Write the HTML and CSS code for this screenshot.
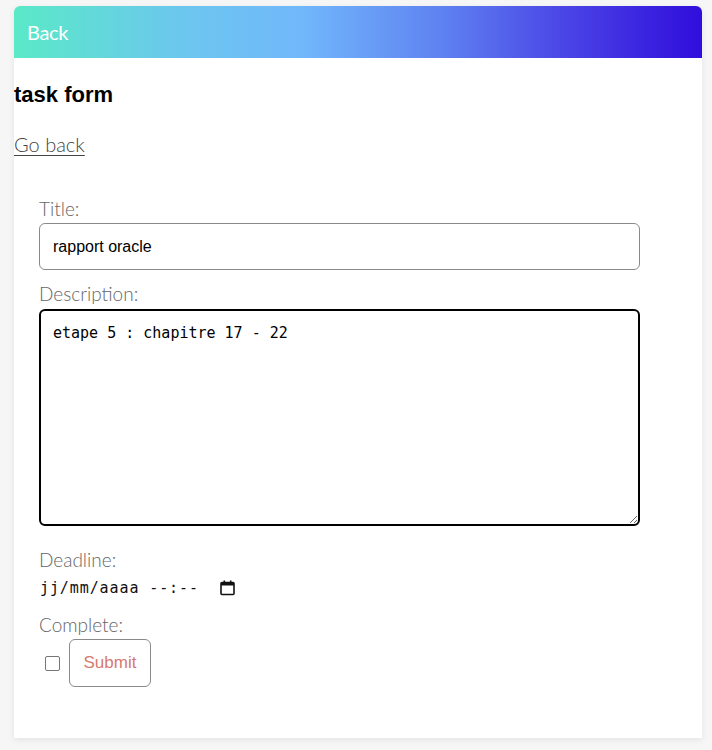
FILE: index.html
```html
<!DOCTYPE html>
<html lang="fr">
<head>
<meta charset="utf-8">
<title>task form</title>
<link rel="stylesheet" href="styles.css">
</head>
<body>
<div class="card">
  <header class="topbar"><a class="back" href="#">Back</a></header>
  <h3 class="heading">task form</h3>
  <a class="goback" href="#">Go back</a>
  <form class="form">
    <label class="lbl" for="title">Title:</label>
    <input class="field" id="title" type="text" value="rapport oracle">
    <label class="lbl" for="desc">Description:</label>
    <textarea class="area" id="desc">etape 5 : chapitre 17 - 22</textarea>
    <label class="lbl">Deadline:</label>
    <div class="date">
      <span class="date-text">jj/mm/aaaa --:--</span>
      <svg class="cal" width="15" height="16" viewBox="0 0 15 16"><rect x="1" y="2.5" width="13" height="12" rx="1" fill="none" stroke="#111" stroke-width="1.6"/><rect x="1" y="2.5" width="13" height="3" fill="#111"/><rect x="3.5" y="0.5" width="1.6" height="3" fill="#111"/><rect x="9.9" y="0.5" width="1.6" height="3" fill="#111"/></svg>
    </div>
    <label class="lbl">Complete:</label>
    <div class="row">
      <span class="check"></span>
      <button class="submit" type="button">Submit</button>
    </div>
  </form>
</div>
</body>
</html>
```
FILE: styles.css
```css
html, body { margin: 0; padding: 0; }
body {
  background: #f6f6f6;
  padding: 6px 10px 12px 14px;
  font-family: Lato, "Open Sans", sans-serif;
}
.card {
  background: #fff;
  border-radius: 6px 6px 0 0;
  box-shadow: 0 2px 6px rgba(0,0,0,0.08);
  height: 732px;
  box-sizing: border-box;
}
.topbar {
  height: 52px;
  border-radius: 6px 6px 0 0;
  background: linear-gradient(to right, #5ae9c7 0%, #6cc6ef 25%, #71b7fb 42%, #5f82f1 62%, #4a45e6 80%, #300ddc 100%);
  display: flex;
  align-items: center;
  padding-left: 13px;
}
.back {
  color: #fff;
  text-decoration: none;
  font-size: 20px;
  font-weight: 400;
  letter-spacing: -0.3px;
}
.heading {
  margin: 24px 0 0 0;
  font-family: "Liberation Sans", Arial, sans-serif;
  font-weight: 700;
  font-size: 22px;
  line-height: 26px;
  color: #000;
}
.goback {
  display: inline-block;
  margin-top: 24px;
  font-size: 20px;
  font-weight: 300;
  line-height: 24px;
  color: #444;
  text-decoration: underline;
  text-decoration-thickness: 1px;
  text-underline-offset: 3px;
}
.form {
  display: flex;
  flex-direction: column;
  align-items: flex-start;
  padding: 42px 0 0 25px;
}
.lbl {
  font-size: 19px;
  font-weight: 300;
  color: #666;
  line-height: 22px;
}
.field {
  margin-top: 3px;
  width: 601px;
  height: 47px;
  box-sizing: border-box;
  border: 1px solid #8a8a8a;
  border-radius: 6px;
  padding: 0 13px;
  font-family: "Liberation Sans", Arial, sans-serif;
  font-size: 16px;
  color: #000;
  outline: none;
  margin-bottom: 13px;
}
.area {
  margin-top: 4px;
  width: 601px;
  height: 217px;
  box-sizing: border-box;
  border: 2px solid #000;
  border-radius: 6px;
  padding: 12px 12px;
  font-family: "DejaVu Sans Mono", monospace;
  font-size: 15px;
  line-height: 20px;
  color: #000;
  outline: none;
  margin-bottom: 23px;
}
.date {
  display: flex;
  align-items: center;
  height: 22px;
  margin: 6px 0 15px 1px;
}
.date-text {
  font-family: "DejaVu Sans Mono", monospace;
  font-size: 15px;
  letter-spacing: 0.9px;
  color: #111;
  white-space: pre;
}
.cal { margin-left: 21px; }
.row {
  display: flex;
  align-items: center;
  margin-top: 3px;
}
.check {
  width: 13px;
  height: 13px;
  border: 1px solid #767676;
  border-radius: 2px;
  margin: 0 9px 0 6px;
  background: #fff;
}
.submit {
  width: 82px;
  height: 48px;
  border: 1px solid #8a8a8a;
  border-radius: 6px;
  background: #fff;
  color: #d57a70;
  font-family: "Liberation Sans", Arial, sans-serif;
  font-size: 17px;
  padding: 0;
}
```
